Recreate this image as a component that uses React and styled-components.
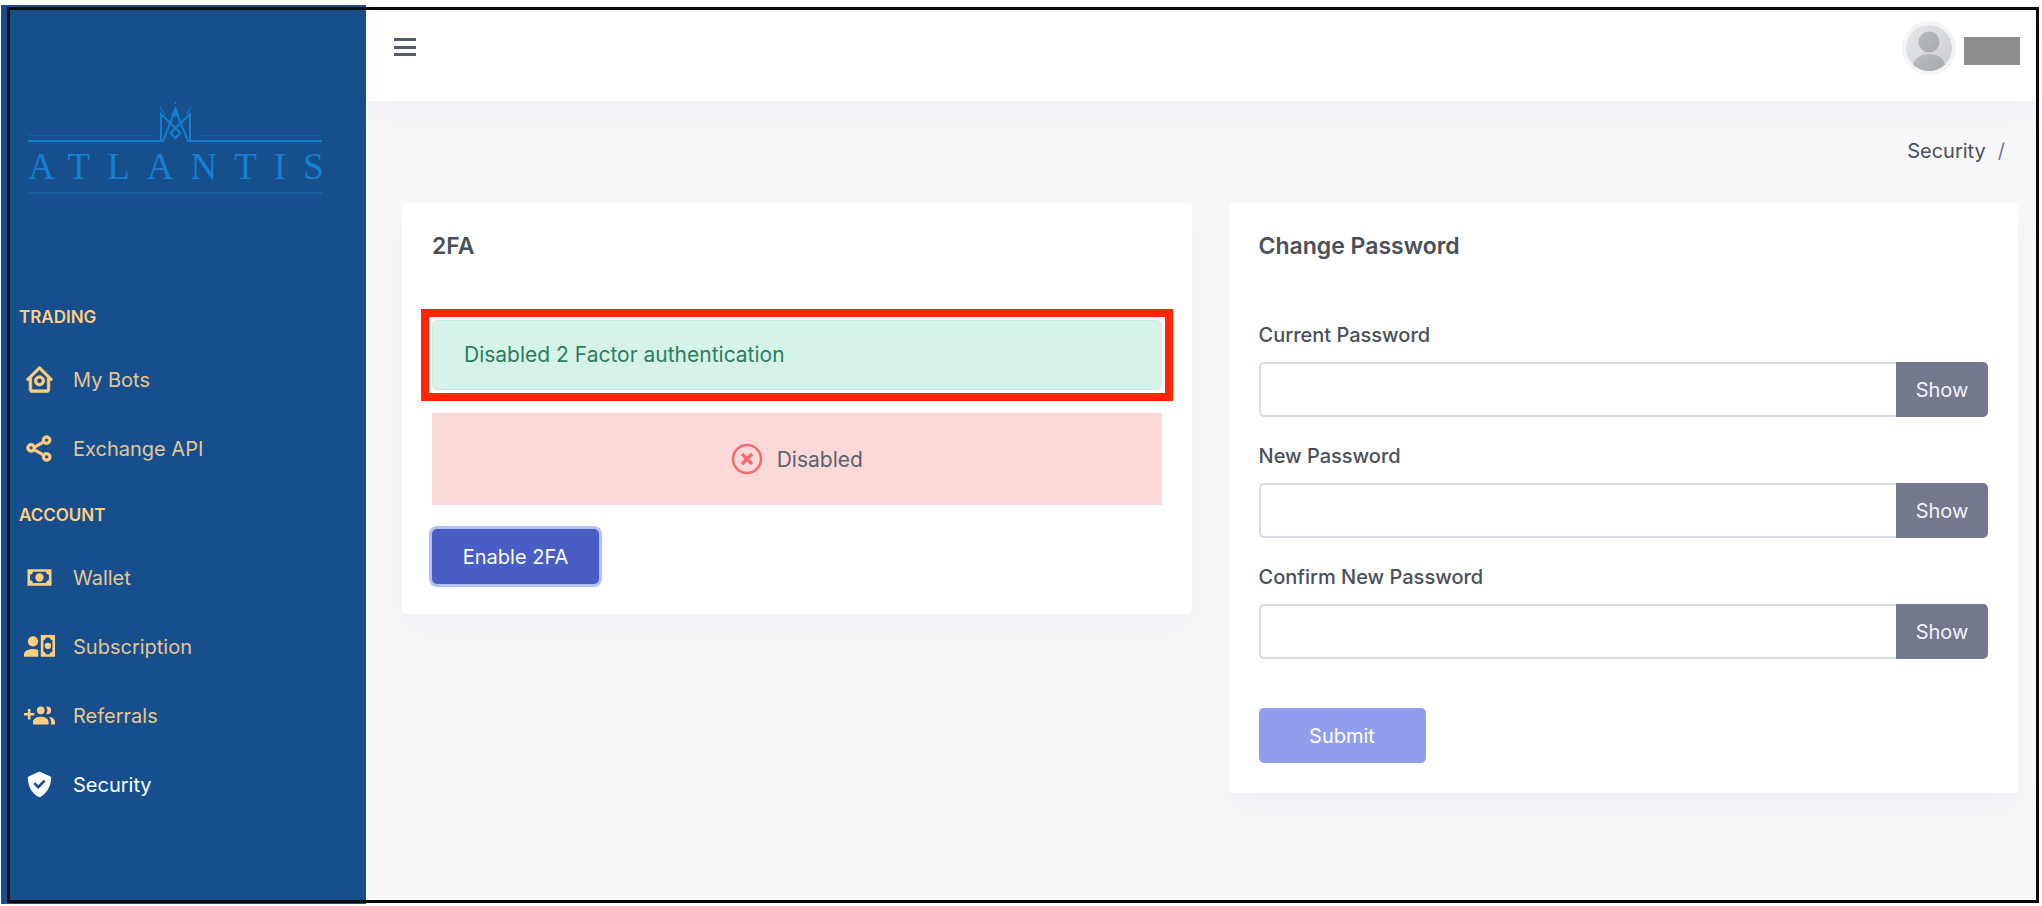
import React, { useState } from "react";
import styled, { createGlobalStyle } from "styled-components";
import { BiHomeCircle, BiShareAlt, BiSolidCheckShield } from "react-icons/bi";

const GlobalStyle = createGlobalStyle`
  *, *::before, *::after {
    box-sizing: border-box;
  }
  body {
    margin: 0;
    background: #fff;
    font-family: "Inter", "Liberation Sans", sans-serif;
    font-size: 20px;
    color: #495057;
  }
  button, input {
    font-family: inherit;
    font-size: inherit;
  }
`;

const StyledPage = styled.div`
  position: relative;
  display: flex;
  min-height: 100vh;
  padding: 5px 4px 2px 1px;
`;
const StyledFrame = styled.div`
  position: absolute;
  inset: 7px 3px 3px 7px;
  border: 3px solid #0b0b0d;
  pointer-events: none;
  z-index: 2;
`;

const StyledSidebar = styled.aside`
  width: 365px;
  flex-shrink: 0;
  background: #174f8c;
`;
const StyledLogo = styled.div`
  display: flex;
  flex-direction: column;
  width: 294px;
  margin: 95px 0 91px 27px;
  color: #157fd0;
  border-bottom: 2px solid #165c9f;
`;
const StyledLogoText = styled.span`
  height: 50px;
  line-height: 50px;
  font-family: "Liberation Serif", serif;
  font-size: 37px;
  letter-spacing: 17px;
  white-space: nowrap;
`;
const StyledMenuTitle = styled.h2`
  display: flex;
  align-items: center;
  height: 60px;
  margin: 0;
  padding: 4px 0 0 18px;
  font-size: 17px;
  font-weight: 600;
  color: #ffce80;
`;
const StyledMenuList = styled.ul`
  margin: 0;
  padding: 0;
  list-style: none;
`;
const StyledMenuLink = styled.a`
  display: flex;
  align-items: center;
  gap: 18px;
  height: 69px;
  padding-left: 23px;
  text-decoration: none;
  color: ${({ $active }) => ($active ? "#fff" : "#e3c794")};
  svg {
    width: 31px;
    height: 31px;
    fill: ${({ $active }) => ($active ? "#fff" : "#ffce80")};
  }
`;

const StyledMain = styled.main`
  flex: 1;
  min-width: 0;
  background: #f8f8fb;
`;
const StyledHeader = styled.header`
  display: flex;
  align-items: center;
  justify-content: space-between;
  height: 96px;
  padding: 0 18px 10px 28px;
  background: #fff;
  box-shadow: 0 16px 32px rgba(18, 38, 63, 0.03);
`;
const StyledIconButton = styled.button`
  display: flex;
  padding: 0;
  border: 0;
  background: none;
`;
const StyledUser = styled.div`
  display: flex;
  align-items: center;
  gap: 8px;
`;
const StyledUserName = styled.span`
  width: 56px;
  height: 28px;
  margin-top: 5px;
  background: #8f8f8f;
`;
const StyledBreadcrumb = styled.nav`
  display: flex;
  justify-content: flex-end;
  gap: 12px;
  padding: 35px 33px 0 0;
  line-height: 30px;
  a {
    color: inherit;
    text-decoration: none;
  }
  span {
    color: #74788d;
  }
`;

const StyledRow = styled.div`
  display: grid;
  grid-template-columns: 1fr 1fr;
  align-items: start;
  gap: 37px;
  padding: 37px 20px 0 36px;
`;
const StyledCard = styled.section`
  padding: 30px;
  border-radius: 5px;
  background: #fff;
  box-shadow: 0 16px 32px rgba(18, 38, 63, 0.03);
`;
const StyledCardTitle = styled.h1`
  margin: 0 0 61px;
  font-size: 23px;
  line-height: 26px;
  font-weight: 600;
`;
const StyledAlert = styled.div`
  position: relative;
  height: 70px;
  margin-bottom: 23px;
  padding: 0 31px;
  font-size: 21px;
  line-height: 68px;
  border: 1px solid #c6eedf;
  border-radius: 5px;
  background: #d6f3e9;
  color: #2c7d60;
  &::after {
    content: "";
    position: absolute;
    inset: -12px;
    border: 8px solid #ff2600;
  }
`;
const StyledStatus = styled.div`
  display: flex;
  align-items: center;
  justify-content: center;
  gap: 14px;
  height: 92px;
  margin-bottom: 24px;
  font-size: 21px;
  background: #fcd9d9;
  color: #5b626b;
`;
const StyledButton = styled.button`
  display: block;
  width: 167px;
  height: 55px;
  padding: 0;
  border: 0;
  border-radius: 5px;
  color: #fff;
  background: ${({ $focused }) => ($focused ? "#485ec4" : "#919eee")};
  box-shadow: ${({ $focused }) => ($focused ? "0 0 0 3px #b5bff3" : "none")};
`;
const StyledField = styled.div`
  margin-bottom: 24px;
`;
const StyledLabel = styled.label`
  display: block;
  margin-bottom: 12px;
  line-height: 30px;
  font-weight: 500;
`;
const StyledInputGroup = styled.div`
  display: flex;
  height: 55px;
`;
const StyledInput = styled.input`
  flex: 1;
  min-width: 0;
  padding: 0 18px;
  border: 2px solid #d8dde3;
  border-right: 0;
  border-radius: 5px 0 0 5px;
  color: #495057;
  outline: none;
`;
const StyledShowButton = styled.button`
  width: 92px;
  padding: 0;
  border: 0;
  border-radius: 0 5px 5px 0;
  background: #74788d;
  color: #eff2f7;
`;
const StyledActions = styled.div`
  padding-top: 25px;
`;

const CashIcon = () => (
  <svg viewBox="0 0 24 24">
    <path
      fillRule="evenodd"
      d="M2.700 5.600h18.600v12.700H2.700zM7 7.600a2.600 2.600 0 0 1-2.300 2.300v4.100A2.600 2.600 0 0 1 7 16.300h10a2.600 2.600 0 0 1 2.300-2.300V9.900A2.600 2.600 0 0 1 17 7.600z"
    />
    <circle cx="12" cy="12" r="3.200" />
  </svg>
);

const AccountCashIcon = () => (
  <svg viewBox="0 0 24 24">
    <path d="M11 8c0 2.210-1.790 4-4 4s-4-1.790-4-4 1.790-4 4-4 4 1.790 4 4m0 6.720V20H0v-2c0-2.210 3.130-4 7-4 1.500 0 2.870.27 4 .72M24 20H13V3h11zm-8-8.500a2.500 2.500 0 0 0 5 0 2.500 2.500 0 0 0-5 0M22 7c-1.100 0-2-.9-2-2h-3c0 1.110-.89 2-2 2v9c1.110 0 2 .9 2 2h3c0-1.110.9-2 2-2z" />
  </svg>
);

const AccountPlusIcon = () => (
  <svg viewBox="0 0 24 24">
    <path d="M19 17v2H7v-2s0-4 6-4 6 4 6 4m-3-9a3 3 0 1 0-3 3 3 3 0 0 0 3-3m3.200 5.060A5.600 5.600 0 0 1 21 17v2h3v-2s0-3.450-4.800-3.940M18 5a2.910 2.910 0 0 0-.89.140 5 5 0 0 1 0 5.720A2.910 2.910 0 0 0 18 11a3 3 0 0 0 0-6M8 10H5V7H3v3H0v2h3v3h2v-3h3z" />
  </svg>
);

const LogoMark = () => (
  <svg width="294" height="42" viewBox="0 0 294 42" fill="none" stroke="currentColor">
    <path d="M0 35.500h125M171 35.500h123" stroke="#165c9f" />
    <path d="M0 41h135L147.500 10 160 41h134" strokeWidth="2" />
    <path d="M133 40V14l19.500 19-5 5-5-5L162 14v26" strokeWidth="2" />
    <path d="M132 7l5 8M163 7l-5 8" strokeWidth="1" />
    <path d="M144 16l3.500-9 3.500 9z" fill="currentColor" />
    <circle cx="147.500" cy="3" r="1" fill="currentColor" stroke="none" />
  </svg>
);

const Avatar = () => (
  <svg width="54" height="54" viewBox="0 0 54 54" role="img" aria-label="User">
    <defs>
      <linearGradient id="face" x1="0" y1="0" x2="1" y2="1">
        <stop offset="0" stopColor="#e6e8ea" />
        <stop offset="1" stopColor="#c9ccd0" />
      </linearGradient>
      <linearGradient id="body" x1="0" y1="0" x2="1" y2="1">
        <stop offset="0" stopColor="#b9bcbf" />
        <stop offset="1" stopColor="#a6a9ad" />
      </linearGradient>
      <clipPath id="round">
        <circle cx="27" cy="27" r="23" />
      </clipPath>
    </defs>
    <circle cx="27" cy="27" r="27" fill="#f4f4f5" />
    <circle cx="27" cy="27" r="23" fill="url(#face)" />
    <g clipPath="url(#round)" fill="url(#body)">
      <circle cx="27" cy="21" r="10.500" />
      <path d="M11 52V44c2-7 7-11 16-11s14 4 16 11v8z" />
    </g>
  </svg>
);

const tradingLinks = [
  { label: "My Bots", icon: <BiHomeCircle stroke="#ffce80" strokeWidth="0.500" /> },
  { label: "Exchange API", icon: <BiShareAlt stroke="#ffce80" strokeWidth="0.500" /> },
];

const accountLinks = [
  { label: "Wallet", icon: <CashIcon /> },
  { label: "Subscription", icon: <AccountCashIcon /> },
  { label: "Referrals", icon: <AccountPlusIcon /> },
  { label: "Security", icon: <BiSolidCheckShield />, active: true },
];

const Menu = ({ title, links }) => (
  <>
    <StyledMenuTitle>{title}</StyledMenuTitle>
    <StyledMenuList>
      {links.map(({ label, icon, active }) => (
        <li key={label}>
          <StyledMenuLink href="#" $active={active}>
            {icon}
            {label}
          </StyledMenuLink>
        </li>
      ))}
    </StyledMenuList>
  </>
);

const PasswordField = ({ id, label }) => {
  const [visible, setVisible] = useState(false);
  return (
    <StyledField>
      <StyledLabel htmlFor={id}>{label}</StyledLabel>
      <StyledInputGroup>
        <StyledInput id={id} type={visible ? "text" : "password"} />
        <StyledShowButton type="button" onClick={() => setVisible(!visible)}>
          Show
        </StyledShowButton>
      </StyledInputGroup>
    </StyledField>
  );
};

const App = () => {
  return (
    <>
      <GlobalStyle />
      <StyledPage>
        <StyledSidebar>
          <StyledLogo>
            <LogoMark />
            <StyledLogoText>ATLANTIS</StyledLogoText>
          </StyledLogo>
          <nav>
            <Menu title="TRADING" links={tradingLinks} />
            <Menu title="ACCOUNT" links={accountLinks} />
          </nav>
        </StyledSidebar>
        <StyledMain>
          <StyledHeader>
            <StyledIconButton type="button" aria-label="Toggle menu">
              <svg width="22" height="20" fill="#555b6d">
                <path d="M0 0h22v3H0zM0 8h22v3H0zM0 15h22v3H0z" />
              </svg>
            </StyledIconButton>
            <StyledUser>
              <Avatar />
              <StyledUserName />
            </StyledUser>
          </StyledHeader>
          <StyledBreadcrumb>
            <a href="#">Security</a>
            <span>/</span>
          </StyledBreadcrumb>
          <StyledRow>
            <StyledCard>
              <StyledCardTitle>2FA</StyledCardTitle>
              <StyledAlert role="alert">Disabled 2 Factor authentication</StyledAlert>
              <StyledStatus>
                <svg width="32" height="32" fill="none" stroke="#f46a6a">
                  <circle cx="16" cy="16" r="14" strokeWidth="2.500" />
                  <path d="M11 11l10 10M21 11L11 21" strokeWidth="3.200" />
                </svg>
                Disabled
              </StyledStatus>
              <StyledButton type="button" $focused>
                Enable 2FA
              </StyledButton>
            </StyledCard>
            <StyledCard as="form">
              <StyledCardTitle>Change Password</StyledCardTitle>
              <PasswordField id="current" label="Current Password" />
              <PasswordField id="new" label="New Password" />
              <PasswordField id="confirm" label="Confirm New Password" />
              <StyledActions>
                <StyledButton type="button">Submit</StyledButton>
              </StyledActions>
            </StyledCard>
          </StyledRow>
        </StyledMain>
        <StyledFrame />
      </StyledPage>
    </>
  );
};

export default App;
